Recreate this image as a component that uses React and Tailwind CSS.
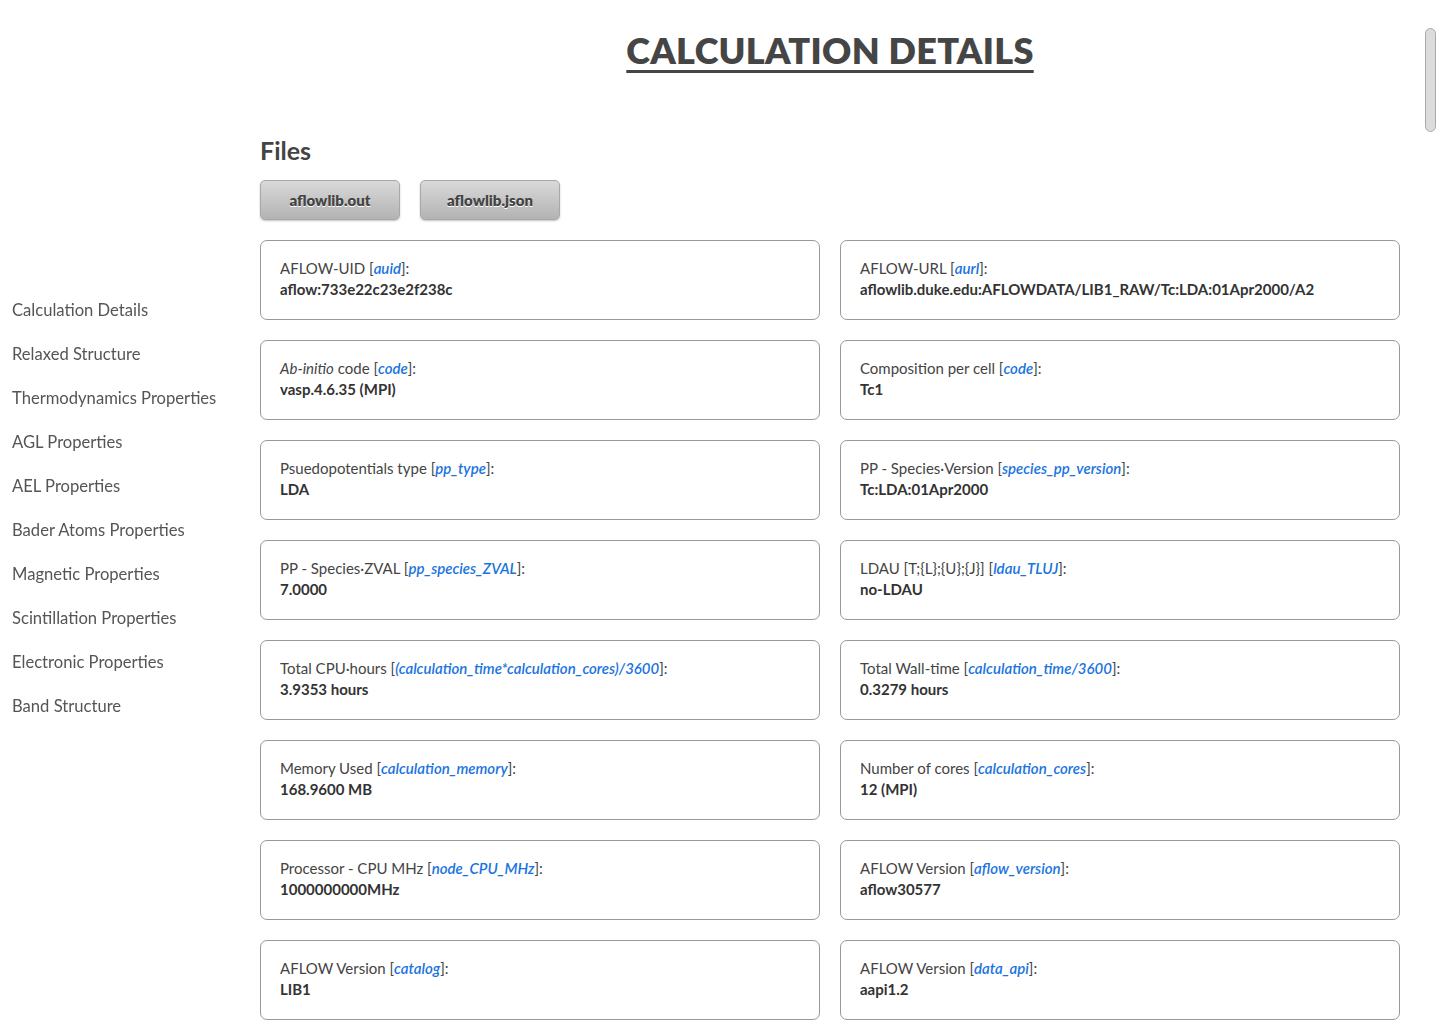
const navItems = [
  'Calculation Details',
  'Relaxed Structure',
  'Thermodynamics Properties',
  'AGL Properties',
  'AEL Properties',
  'Bader Atoms Properties',
  'Magnetic Properties',
  'Scintillation Properties',
  'Electronic Properties',
  'Band Structure',
]

const details = [
  { label: 'AFLOW-UID', key: 'auid', value: 'aflow:733e22c23e2f238c' },
  { label: 'AFLOW-URL', key: 'aurl', value: 'aflowlib.duke.edu:AFLOWDATA/LIB1_RAW/Tc:LDA:01Apr2000/A2' },
  { label: <><i>Ab-initio</i> code</>, key: 'code', value: 'vasp.4.6.35 (MPI)' },
  { label: 'Composition per cell', key: 'code', value: 'Tc1' },
  { label: 'Psuedopotentials type', key: 'pp_type', value: 'LDA' },
  { label: 'PP - Species·Version', key: 'species_pp_version', value: 'Tc:LDA:01Apr2000' },
  { label: 'PP - Species·ZVAL', key: 'pp_species_ZVAL', value: '7.0000' },
  { label: 'LDAU [T;{L};{U};{J}]', key: 'ldau_TLUJ', value: 'no-LDAU' },
  { label: 'Total CPU·hours', key: '(calculation_time*calculation_cores)/3600', value: '3.9353 hours' },
  { label: 'Total Wall-time', key: 'calculation_time/3600', value: '0.3279 hours' },
  { label: 'Memory Used', key: 'calculation_memory', value: '168.9600 MB' },
  { label: 'Number of cores', key: 'calculation_cores', value: '12 (MPI)' },
  { label: 'Processor - CPU MHz', key: 'node_CPU_MHz', value: '1000000000MHz' },
  { label: 'AFLOW Version', key: 'aflow_version', value: 'aflow30577' },
  { label: 'AFLOW Version', key: 'catalog', value: 'LIB1' },
  { label: 'AFLOW Version', key: 'data_api', value: 'aapi1.2' },
]

function FileButton({ children }) {
  return (
    <button className="w-[140px] h-[40px] rounded-[5px] border border-[#a8a8a8] bg-gradient-to-b from-[#d9d9d9] to-[#b3b3b3] shadow-[0_1px_2px_rgba(0,0,0,0.25)] text-[15px] font-extrabold text-[#444] [text-shadow:0_1px_0_#fff]">
      {children}
    </button>
  )
}

export default function App() {
  return (
    <div className="min-h-screen bg-white text-[#444] font-['Lato','Open_Sans',sans-serif]">
      <nav className="fixed left-[12px] top-0 h-screen flex flex-col justify-center">
        <ul className="flex flex-col gap-[22px] pb-[8px]">
          {navItems.map(item => (
            <li key={item} className="text-[16.6px] leading-[22px] text-[#555]">{item}</li>
          ))}
        </ul>
      </nav>

      <div className="fixed right-[4px] top-[28px] w-[11px] h-[104px] rounded-full bg-[#dcdcdc] border border-[#a9a9a9]" />

      <main className="pl-[260px] pr-[40px] pb-10">
        <h1 className="pt-[28px] text-center text-[36px] leading-[44px] font-extrabold text-[#454545] tracking-[0.3px]">
          <span className="underline decoration-[3px] underline-offset-[6px]">CALCULATION DETAILS</span>
        </h1>

        <h2 className="mt-[62px] text-[25px] leading-[32px] font-bold text-[#444]">Files</h2>
        <div className="mt-[14px] flex gap-[20px]">
          <FileButton>aflowlib.out</FileButton>
          <FileButton>aflowlib.json</FileButton>
        </div>

        <div className="mt-[20px] grid grid-cols-2 gap-[20px]">
          {details.map((d, i) => (
            <div key={i} className="h-[80px] rounded-[7px] border border-[#999] px-[19px] py-[17px] text-[15px] leading-[21px]">
              <div className="text-[#444]">
                {d.label} [<i className="text-[#1a74e0] font-semibold">{d.key}</i>]:
              </div>
              <div className="font-bold text-[#333]">{d.value}</div>
            </div>
          ))}
        </div>
      </main>
    </div>
  )
}
